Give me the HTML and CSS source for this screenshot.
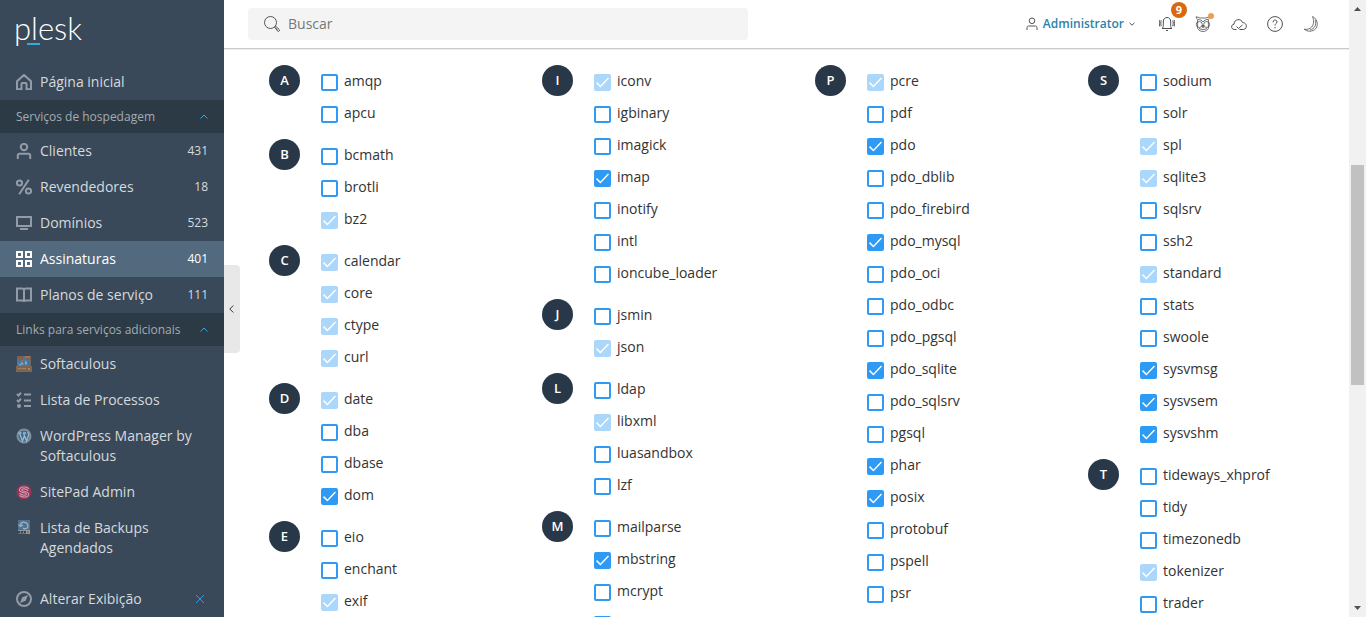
FILE: index.html
```html
<!DOCTYPE html>
<html lang="pt-BR">
<head>
<meta charset="utf-8">
<meta name="viewport" content="width=device-width, initial-scale=1">
<title>Plesk</title>
<link rel="stylesheet" href="styles.css">
</head>
<body>
<div class="app">
  <aside class="sidebar">
    <a class="logo" href="#">plesk</a>
    <nav class="nav">
      <a class="nav-item" href="#">
        <svg class="icon" viewBox="0 0 16 16"><path d="M1 7.2 8 .9l7 6.3v8.1h-4.500V9.800a.8.8 0 0 0-.8-.8H6.300a.8.8 0 0 0-.8.8v5.500H1z"/></svg>
        <span class="nav-text">Página inicial</span>
      </a>
      <button class="nav-section" type="button">Serviços de hospedagem
        <svg class="chevron" viewBox="0 0 8 5"><path d="M.5 4.500 4 1l3.500 3.500"/></svg>
      </button>
      <a class="nav-item" href="#">
        <svg class="icon" viewBox="0 0 16 16"><circle cx="8" cy="4" r="3.200"/><path d="M1.800 16v-3.500c0-1 .8-1.800 1.800-1.800h8.800c1 0 1.800.8 1.800 1.800V16"/></svg>
        <span class="nav-text">Clientes</span><span class="count">431</span>
      </a>
      <a class="nav-item" href="#">
        <svg class="icon" viewBox="0 0 16 16"><circle cx="3.500" cy="4" r="2.600"/><circle cx="12.500" cy="12" r="2.600"/><path d="M12.800.8 3.200 15.200"/></svg>
        <span class="nav-text">Revendedores</span><span class="count">18</span>
      </a>
      <a class="nav-item" href="#">
        <svg class="icon" viewBox="0 0 16 16"><path d="M1 2h14v9H1zM4 14h8"/></svg>
        <span class="nav-text">Domínios</span><span class="count">523</span>
      </a>
      <a class="nav-item active" href="#">
        <svg class="icon" viewBox="0 0 16 16"><path d="M1 1h5v5H1zM10 1h5v5h-5zM1 10h5v5H1zM10 10h5v5h-5z"/></svg>
        <span class="nav-text">Assinaturas</span><span class="count">401</span>
      </a>
      <a class="nav-item" href="#">
        <svg class="icon" viewBox="0 0 16 16"><path d="M8 3c0-1-.8-1.500-1.800-1.500H1v12h5.200c1 0 1.800.5 1.800 1.500 0-1 .8-1.500 1.800-1.500H15v-12H9.800C8.800 1.500 8 2 8 3zv12"/></svg>
        <span class="nav-text">Planos de serviço</span><span class="count">111</span>
      </a>
      <button class="nav-section" type="button">Links para serviços adicionais
        <svg class="chevron" viewBox="0 0 8 5"><path d="M.5 4.500 4 1l3.500 3.500"/></svg>
      </button>
      <a class="nav-item" href="#">
        <svg class="icon picture" viewBox="0 0 16 16"><path fill="#7b6257" d="M1 0h14v10H1z"/><path fill="#4178ab" d="M1 3h3v3h3V1h3v3h4v6H1z"/><path fill="#9fb0bc" d="m1 5 3 4 2-3 2 3 2-5 1 4-1 1-1-2-1 2-2-1-2 2z"/><path fill="#b5693f" d="M9 0h5v2H9zM5 4h2v2H5z"/><path fill="#7f6553" d="M0 10h16v6H0z"/><path fill="#a48565" d="M2 12h3v1H2zM6 12h4v1H6zM12 12h2v2h-2z"/></svg>
        <span class="nav-text">Softaculous</span>
      </a>
      <a class="nav-item" href="#">
        <svg class="icon" viewBox="0 0 16 16"><path d="m1 2 1.500 1.500L5 .8M1 8l1.500 1.500L5 6.800M8 2.500h7M8 8.500h7M8 14h7"/><circle class="solid" cx="3" cy="14" r="2"/></svg>
        <span class="nav-text">Lista de Processos</span>
      </a>
      <a class="nav-item" href="#">
        <svg class="icon picture" viewBox="0 0 16 16"><circle cx="8" cy="8" r="7" fill="#386d98"/><circle cx="8" cy="8" r="6.500" fill="none" stroke="#7f8f9c"/><path fill="none" stroke="#a9b4bd" stroke-width="1.300" d="M2.500 5h3M7 5h3M3.500 5l3 8L8.300 8M7.500 5l3 8 2.200-6c.4-1-1-1.800-.8-3"/></svg>
        <span class="nav-text">WordPress Manager by Softaculous</span>
      </a>
      <a class="nav-item" href="#">
        <svg class="icon picture" viewBox="0 0 16 16"><circle cx="8" cy="8" r="7.500" fill="#9c3459"/><path fill="none" stroke="#c79fae" stroke-width="1.100" d="M13 5C11 2 3.500 2.500 3.500 6c0 3.500 7 2 7 4 0 1.800-4 1.500-7-.5M12 7C11 4.500 5.700 4.200 5.700 6c0 2 7 1 7 4 0 3.500-6 4-9.200 1.500"/></svg>
        <span class="nav-text">SitePad Admin</span>
      </a>
      <a class="nav-item" href="#">
        <svg class="icon picture" viewBox="0 0 16 16"><path fill="#4d7390" d="M2 0h12v11H2z"/><path fill="#8c99a3" d="M2 10h12v4H2z"/><path fill="none" stroke="#a0b2c0" stroke-width="1.300" d="M4.500 5c1-4.500 7.500-3 7.500 1 0 2.500-3 3.500-5 2M2.500 4.500l2 2 2.500-1.500"/><path fill="#39444e" d="M2 11h8v2.500H2z"/><path fill="#8c99a3" d="M4 11.500h1v1.500H4zM7 11.500h1v1.500H7z"/><path fill="#ae6d4e" d="M11 11h2v2h-2z"/></svg>
        <span class="nav-text">Lista de Backups Agendados</span>
      </a>
    </nav>
    <div class="nav-footer">
      <a class="nav-item" href="#">
        <svg class="icon" viewBox="0 0 16 16"><circle cx="8" cy="8" r="7"/><path class="solid" d="m12 4-2.200 5.800L4 12l2.200-5.800z"/></svg>
        <span class="nav-text">Alterar Exibição</span>
      </a>
      <button class="dismiss" type="button" aria-label="Fechar"><svg viewBox="0 0 10 10"><path d="m1 1 8 8M9 1 1 9"/></svg></button>
    </div>
    <button class="collapse" type="button" aria-label="Recolher menu"><svg viewBox="0 0 5 8"><path d="M4.300.5.8 4l3.500 3.500"/></svg></button>
  </aside>

  <div class="page">
    <header class="topbar">
      <label class="search">
        <svg class="tool-icon" viewBox="0 0 16 16"><circle cx="6.500" cy="6.500" r="6"/><path d="m10.500 11 1-1 3.700 3.500c1 .9-.5 2.600-1.500 1.700zM12 12.500l1.500 1.300"/></svg>
        <input class="search-input" type="text" placeholder="Buscar" aria-label="Buscar">
      </label>
      <div class="tools">
        <button class="account" type="button">
          <svg viewBox="0 0 12 14"><circle cx="6" cy="3.800" r="2.800"/><path d="M1 13v-2.500C1 9.700 1.700 9 2.500 9h7c.8 0 1.500.7 1.500 1.500V13"/></svg>
          Administrator
          <svg class="caret" viewBox="0 0 6 4"><path d="m.5.8 2.500 2.400L5.500.8"/></svg>
        </button>
        <button class="tool" type="button" aria-label="Notificações">
          <svg class="tool-icon" viewBox="0 0 16 16"><path d="M3 12.500c1-.7 1.300-1.500 1.300-3V6c0-3 1.300-4.500 3.700-4.500S11.700 3 11.700 6v3.500c0 1.500.3 2.300 1.300 3zM7 14.500h2M2.300 4.500c-.7 1.500-.7 4 0 5.500M.9 4c-.8 2-.8 4.500 0 6.500M13.700 4.500c.7 1.500.7 4 0 5.500M15.100 4c.8 2 .8 4.500 0 6.500"/></svg>
          <span class="badge">9</span>
        </button>
        <button class="tool" type="button" aria-label="Assistente">
          <svg class="tool-icon thin" viewBox="0 0 16 16"><path d="M1 .8c1.500 0 2.500.7 4 1.200h6c1.500-.5 2.500-1.200 4-1.200-.3 1.200-.8 2-1.600 2.700v9C12 14.500 10 15.500 8 15.500s-4-1-5.400-3v-9C1.800 2.800 1.300 2 1 .8zM3 3.500c2 0 4 .8 5 2.500 1-1.700 3-2.500 5-2.500M7 9.500h2l-1 2.500zM4 12.500c2.500 1.300 5.500 1.300 8 0"/><circle cx="4.300" cy="8.500" r="3"/><circle cx="11.700" cy="8.500" r="3"/></svg>
          <span class="dot"></span>
        </button>
        <button class="tool" type="button" aria-label="Nuvem">
          <svg class="tool-icon" viewBox="0 0 16 16"><path d="M5.500 13.500H3.200C-.2 13.200-.2 8.500 3 8.200c0-5.500 7.500-6 8.500-1.700 5 .2 5 6.700.8 7H8.500M5.500 10.500l2 2L11.500 9"/></svg>
        </button>
        <button class="tool" type="button" aria-label="Ajuda">
          <svg class="tool-icon" viewBox="0 0 16 16"><circle cx="8" cy="8" r="7.400"/><path d="M6 6.300C6 3.200 10.200 3.500 10 6c-.1 1.500-2 1.500-2 3.500M8 11v1.300"/></svg>
        </button>
        <button class="tool" type="button" aria-label="Modo escuro">
          <svg class="tool-icon thin" viewBox="0 0 16 16"><path d="M9.500.6c6.500 2.500 7 14-2.500 14.600-2.300.1-4.300-.7-5.800-2 2.500.5 5.500 0 7.500-2.200 2.300-2.700 2.500-7 .8-10.400zM12.300 4c1.500 4.500-.8 9-5.300 10"/></svg>
        </button>
      </div>
    </header>

    <main class="extensions">
      <div class="column">
        <section class="group"><h2 class="letter">A</h2><div class="items">
          <label class="item"><input class="check" type="checkbox">amqp</label>
          <label class="item"><input class="check" type="checkbox">apcu</label>
        </div></section>
        <section class="group"><h2 class="letter">B</h2><div class="items">
          <label class="item"><input class="check" type="checkbox">bcmath</label>
          <label class="item"><input class="check" type="checkbox">brotli</label>
          <label class="item"><input class="check" type="checkbox" checked disabled>bz2</label>
        </div></section>
        <section class="group"><h2 class="letter">C</h2><div class="items">
          <label class="item"><input class="check" type="checkbox" checked disabled>calendar</label>
          <label class="item"><input class="check" type="checkbox" checked disabled>core</label>
          <label class="item"><input class="check" type="checkbox" checked disabled>ctype</label>
          <label class="item"><input class="check" type="checkbox" checked disabled>curl</label>
        </div></section>
        <section class="group"><h2 class="letter">D</h2><div class="items">
          <label class="item"><input class="check" type="checkbox" checked disabled>date</label>
          <label class="item"><input class="check" type="checkbox">dba</label>
          <label class="item"><input class="check" type="checkbox">dbase</label>
          <label class="item"><input class="check" type="checkbox" checked>dom</label>
        </div></section>
        <section class="group"><h2 class="letter">E</h2><div class="items">
          <label class="item"><input class="check" type="checkbox">eio</label>
          <label class="item"><input class="check" type="checkbox">enchant</label>
          <label class="item"><input class="check" type="checkbox" checked disabled>exif</label>
        </div></section>
      </div>
      <div class="column">
        <section class="group"><h2 class="letter">I</h2><div class="items">
          <label class="item"><input class="check" type="checkbox" checked disabled>iconv</label>
          <label class="item"><input class="check" type="checkbox">igbinary</label>
          <label class="item"><input class="check" type="checkbox">imagick</label>
          <label class="item"><input class="check" type="checkbox" checked>imap</label>
          <label class="item"><input class="check" type="checkbox">inotify</label>
          <label class="item"><input class="check" type="checkbox">intl</label>
          <label class="item"><input class="check" type="checkbox">ioncube_loader</label>
        </div></section>
        <section class="group"><h2 class="letter">J</h2><div class="items">
          <label class="item"><input class="check" type="checkbox">jsmin</label>
          <label class="item"><input class="check" type="checkbox" checked disabled>json</label>
        </div></section>
        <section class="group"><h2 class="letter">L</h2><div class="items">
          <label class="item"><input class="check" type="checkbox">ldap</label>
          <label class="item"><input class="check" type="checkbox" checked disabled>libxml</label>
          <label class="item"><input class="check" type="checkbox">luasandbox</label>
          <label class="item"><input class="check" type="checkbox">lzf</label>
        </div></section>
        <section class="group"><h2 class="letter">M</h2><div class="items">
          <label class="item"><input class="check" type="checkbox">mailparse</label>
          <label class="item"><input class="check" type="checkbox" checked>mbstring</label>
          <label class="item"><input class="check" type="checkbox">mcrypt</label>
          <label class="item"><input class="check" type="checkbox" aria-label="memcache"></label>
        </div></section>
      </div>
      <div class="column">
        <section class="group"><h2 class="letter">P</h2><div class="items">
          <label class="item"><input class="check" type="checkbox" checked disabled>pcre</label>
          <label class="item"><input class="check" type="checkbox">pdf</label>
          <label class="item"><input class="check" type="checkbox" checked>pdo</label>
          <label class="item"><input class="check" type="checkbox">pdo_dblib</label>
          <label class="item"><input class="check" type="checkbox">pdo_firebird</label>
          <label class="item"><input class="check" type="checkbox" checked>pdo_mysql</label>
          <label class="item"><input class="check" type="checkbox">pdo_oci</label>
          <label class="item"><input class="check" type="checkbox">pdo_odbc</label>
          <label class="item"><input class="check" type="checkbox">pdo_pgsql</label>
          <label class="item"><input class="check" type="checkbox" checked>pdo_sqlite</label>
          <label class="item"><input class="check" type="checkbox">pdo_sqlsrv</label>
          <label class="item"><input class="check" type="checkbox">pgsql</label>
          <label class="item"><input class="check" type="checkbox" checked>phar</label>
          <label class="item"><input class="check" type="checkbox" checked>posix</label>
          <label class="item"><input class="check" type="checkbox">protobuf</label>
          <label class="item"><input class="check" type="checkbox">pspell</label>
          <label class="item"><input class="check" type="checkbox">psr</label>
        </div></section>
      </div>
      <div class="column">
        <section class="group"><h2 class="letter">S</h2><div class="items">
          <label class="item"><input class="check" type="checkbox">sodium</label>
          <label class="item"><input class="check" type="checkbox">solr</label>
          <label class="item"><input class="check" type="checkbox" checked disabled>spl</label>
          <label class="item"><input class="check" type="checkbox" checked disabled>sqlite3</label>
          <label class="item"><input class="check" type="checkbox">sqlsrv</label>
          <label class="item"><input class="check" type="checkbox">ssh2</label>
          <label class="item"><input class="check" type="checkbox" checked disabled>standard</label>
          <label class="item"><input class="check" type="checkbox">stats</label>
          <label class="item"><input class="check" type="checkbox">swoole</label>
          <label class="item"><input class="check" type="checkbox" checked>sysvmsg</label>
          <label class="item"><input class="check" type="checkbox" checked>sysvsem</label>
          <label class="item"><input class="check" type="checkbox" checked>sysvshm</label>
        </div></section>
        <section class="group"><h2 class="letter">T</h2><div class="items">
          <label class="item"><input class="check" type="checkbox">tideways_xhprof</label>
          <label class="item"><input class="check" type="checkbox">tidy</label>
          <label class="item"><input class="check" type="checkbox">timezonedb</label>
          <label class="item"><input class="check" type="checkbox" checked disabled>tokenizer</label>
          <label class="item"><input class="check" type="checkbox">trader</label>
        </div></section>
      </div>
    </main>
  </div>

  <div class="scrollbar" aria-hidden="true">
    <svg viewBox="0 0 17 17"><path d="m5 11 3.500-4 3.500 4z"/></svg>
    <span class="thumb"></span>
    <svg class="down" viewBox="0 0 17 17"><path d="m5 6 3.500 4L12 6z"/></svg>
  </div>
</div>
</body>
</html>
```
FILE: styles.css
```css
* {
  box-sizing: border-box;
}

body {
  margin: 0;
  font: 14px/20px "Open Sans", "Noto Sans", sans-serif;
  color: #333;
  background: #fff;
}

button {
  padding: 0;
  border: 0;
  background: none;
  font: inherit;
  color: inherit;
}

a {
  color: inherit;
  text-decoration: none;
}

svg {
  display: block;
  flex: none;
  fill: none;
  stroke: currentColor;
}

.app {
  display: grid;
  grid-template-columns: 224px minmax(0, 1fr) 17px;
  height: 100vh;
  overflow: hidden;
}

/* Sidebar */

.sidebar {
  position: relative;
  display: flex;
  flex-direction: column;
  min-height: 0;
  background: #3a4959;
  color: #d5dade;
}

.logo {
  position: relative;
  flex: none;
  height: 64px;
  padding-left: 14px;
  font: 300 31px/56px Lato, sans-serif;
  color: #fff;
}

.logo::after {
  content: "";
  position: absolute;
  left: 27px;
  top: 43px;
  width: 13px;
  height: 2px;
  background: #35a9e0;
}

.nav {
  flex: 1;
  min-height: 0;
  overflow: hidden;
}

.nav-item {
  display: flex;
  flex: 1;
  gap: 8px;
  padding: 8px 16px;
  font-weight: 500;
}

.nav-item.active {
  background: #53697d;
  color: #fff;
}

.nav-text {
  flex: 1;
}

.count {
  font-size: 12px;
}

.icon {
  width: 16px;
  height: 16px;
  margin-top: 2px;
  color: #939ca6;
  stroke-width: 2;
}

.active .icon {
  color: #fff;
}

.icon .solid {
  fill: currentColor;
  stroke: none;
}

.picture {
  stroke: none;
}

.nav-section {
  display: flex;
  align-items: center;
  justify-content: space-between;
  width: 100%;
  height: 33px;
  padding: 0 16px;
  background: #2c3a46;
  color: #a4abb2;
  font-size: 12px;
  text-align: left;
}

.chevron {
  width: 8px;
  height: 5px;
  color: #35a9e0;
}

.nav-footer {
  display: flex;
  align-items: center;
}

.dismiss {
  padding: 0 19px;
  color: #2f9ae6;
}

.dismiss svg {
  width: 10px;
  height: 10px;
}

.collapse {
  position: absolute;
  left: 100%;
  top: calc(50% - 44px);
  display: grid;
  place-items: center;
  width: 16px;
  height: 88px;
  padding-right: 2px;
  border-radius: 0 4px 4px 0;
  background: #e8e8e8;
  color: #333;
}

.collapse svg {
  width: 5px;
  height: 8px;
}

/* Top bar */

.page {
  display: flex;
  flex-direction: column;
  min-height: 0;
}

.topbar {
  display: flex;
  flex: none;
  align-items: center;
  justify-content: space-between;
  height: 49px;
  padding: 0 20px 0 24px;
  border-bottom: 1px solid #c8cac9;
  box-shadow: 0 1px 1px #eee;
}

.search {
  display: flex;
  align-items: center;
  gap: 8px;
  flex: 0 1 500px;
  height: 32px;
  padding: 0 16px;
  border-radius: 4px;
  background: #f4f4f4;
  color: #555;
}

.search-input {
  flex: 1;
  min-width: 0;
  padding: 0;
  border: 0;
  outline: 0;
  background: none;
  font: inherit;
}

.search-input::placeholder {
  color: #777;
}

.tools {
  display: flex;
  align-items: center;
  color: #4a4e53;
}

.account {
  display: flex;
  align-items: center;
  gap: 5px;
  margin-right: 14px;
  font-size: 12px;
  font-weight: 600;
  color: #2c83a9;
}

.account svg {
  width: 12px;
  height: 14px;
  color: #555;
}

.account .caret {
  width: 6px;
  height: 4px;
}

.tool {
  position: relative;
  display: grid;
  place-items: center;
  width: 36px;
  height: 36px;
}

.tool-icon {
  width: 16px;
  height: 16px;
}

.thin {
  stroke-width: .8;
}

.badge {
  position: absolute;
  left: 22px;
  top: -4px;
  width: 16px;
  height: 16px;
  border-radius: 50%;
  background: #d9680c;
  color: #fff;
  font-size: 11px;
  font-weight: 700;
  line-height: 16px;
  text-align: center;
}

.dot {
  position: absolute;
  left: 23px;
  top: 7px;
  width: 6px;
  height: 6px;
  border-radius: 50%;
  background: #eba050;
}

/* Extension list */

.extensions {
  display: grid;
  grid-template-columns: repeat(4, minmax(0, 1fr));
  gap: 36px;
  min-height: 0;
  padding: 16px 24px 0 45px;
  overflow: hidden;
}

.group {
  display: flex;
  gap: 21px;
  margin-bottom: 10px;
}

.letter {
  flex: none;
  width: 31px;
  height: 31px;
  margin: 0;
  border-radius: 50%;
  background: #283848;
  color: #fff;
  font-size: 13px;
  font-weight: 600;
  line-height: 31px;
  text-align: center;
}

.item {
  display: flex;
  gap: 6px;
  height: 32px;
  line-height: 32px;
}

.check {
  appearance: none;
  display: grid;
  place-items: center;
  flex: none;
  width: 17px;
  height: 17px;
  margin: 9px 0 0;
  border: 2px solid #2e9af3;
  border-radius: 2px;
  background: #fff;
}

.check:checked {
  background: #2e9af3;
}

.check:checked::before {
  content: "";
  width: 13px;
  height: 13px;
  background: #fff;
  clip-path: polygon(0 55%, 8% 47%, 34% 73%, 92% 12%, 100% 20%, 34% 89%);
}

.check:disabled {
  border-color: #abd7fa;
  background: #abd7fa;
}

/* Scrollbar */

.scrollbar {
  display: grid;
  grid-template-rows: 17px 148fr 220fr 215fr 17px;
  background: #f1f1f1;
}

.scrollbar svg {
  width: 17px;
  height: 17px;
  fill: #505050;
  stroke: none;
}

.thumb {
  grid-row: 3;
  margin: 0 2px;
  background: #c1c1c1;
}

.scrollbar .down {
  grid-row: 5;
}
```
